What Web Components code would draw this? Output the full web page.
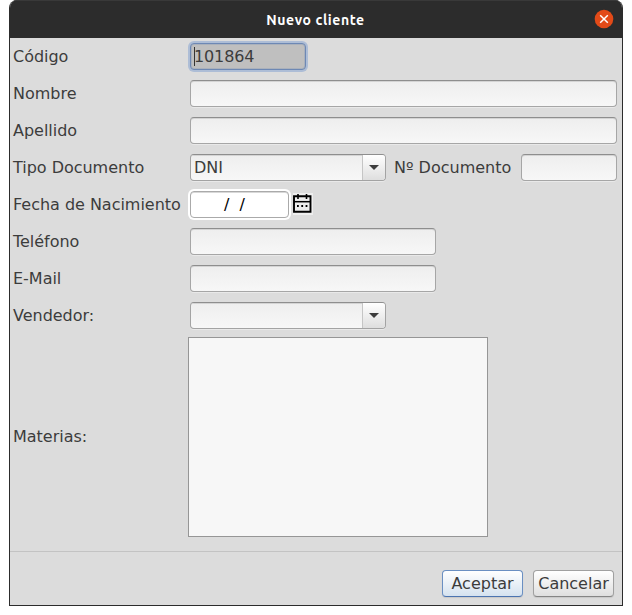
<!DOCTYPE html>
<html lang="es">
<head>
<meta charset="utf-8">
<title>Nuevo cliente</title>
<style>
html,body{margin:0;background:#fff;overflow:hidden}
body{font:16px "DejaVu Sans",sans-serif;color:#3c3c3c}
</style>
</head>
<body>
<app-dialog>
  <span slot="title">Nuevo cliente</span>
  <form-row label="Código"><text-field focused value="101864" style="width:116px"></text-field></form-row>
  <form-row label="Nombre"><text-field style="width:427px"></text-field></form-row>
  <form-row label="Apellido"><text-field style="width:427px"></text-field></form-row>
  <form-row label="Tipo Documento">
    <combo-box value="DNI"></combo-box>
    <side-label>Nº Documento</side-label>
    <text-field style="width:96px"></text-field>
  </form-row>
  <form-row label="Fecha de Nacimiento">
    <text-field date value="/  /" style="width:99px"></text-field>
    <calendar-icon></calendar-icon>
  </form-row>
  <form-row label="Teléfono"><text-field style="width:246px"></text-field></form-row>
  <form-row label="E-Mail"><text-field style="width:246px"></text-field></form-row>
  <form-row label="Vendedor:"><combo-box></combo-box></form-row>
  <form-row label="Materias:" tall><list-box></list-box></form-row>
  <push-button slot="actions" primary>Aceptar</push-button>
  <push-button slot="actions">Cancelar</push-button>
</app-dialog>
<script>
const define = (name, markup, setup) => customElements.define(name, class extends HTMLElement {
  constructor() {
    super();
    this.attachShadow({mode: 'open'}).innerHTML = markup;
  }
  connectedCallback() { if (setup) setup(this, this.shadowRoot); }
});

define('app-dialog', `<style>
:host{display:flex;flex-direction:column;box-sizing:border-box;width:614px;height:606px;margin-left:9px;border:1px solid #2c2c2c;border-top:0;border-radius:8px 8px 0 0;background:#dcdcdc;overflow:hidden}
header{display:grid;grid-template-columns:1fr auto 1fr;align-items:center;height:38px;flex:none;background:#2c2c2c;box-shadow:inset 0 1px #393939;color:#fff;font:bold 14px Ubuntu,"Noto Sans",sans-serif;letter-spacing:.58px}
.title{grid-column:2;padding-top:1px;margin-right:1px;white-space:nowrap}
svg{justify-self:end;margin-right:8px}
main{flex:none}
footer{display:flex;justify-content:flex-end;gap:10px;margin-top:12px;border-top:1px solid #c3c3c3;padding:18px 8px 0 0}
</style>
<header><div class="title"><slot name="title"></slot></div>
<svg width="20" height="20" viewBox="0 0 20 20"><circle cx="10" cy="10" r="9.3" fill="#e24a18"/><path d="M6.2 6.2l7.6 7.6M13.8 6.2l-7.6 7.6" stroke="#fff" stroke-width="1.5"/></svg></header>
<main><slot></slot></main><footer><slot name="actions"></slot></footer>`);

define('form-row', `<style>
:host{display:flex;align-items:center;height:37px}
:host([tall]){height:205px}
label{width:177px;padding-left:3px;box-sizing:content-box;flex:none;white-space:nowrap;letter-spacing:-.02px}
</style><label></label><slot></slot>`, (el, root) => {
  root.querySelector('label').textContent = el.getAttribute('label');
});

define('side-label', `<style>:host{display:block;width:127px;padding-left:8px;white-space:nowrap;box-sizing:content-box}</style><slot></slot>`);

define('text-field', `<style>
:host{display:flex;align-items:center;box-sizing:border-box;height:27px;flex:none;border:1px solid #a6a6a6;border-top-color:#8e8e8e;border-radius:4px;background:linear-gradient(#eee,#f7f7f7);box-shadow:0 1px #e9e9e9,inset 0 1px #d4d4d4;padding-left:3px;white-space:pre}
:host([focused]){background:#bfbfbf;border-color:#6d88b4;box-shadow:0 0 0 2px #adbdd6,inset 0 0 0 1px #aab1bc;letter-spacing:-.12px}
:host([date]){background:#fff;border-color:#aaa;box-shadow:0 0 0 2px #fff,inset 0 1px #d8d8d8;color:#000;padding-left:33px}
i{display:none;width:1px;height:19px;background:#333;margin-right:-1px}
:host([focused]) i{display:block}
</style><i></i><span></span>`, (el, root) => {
  root.querySelector('span').textContent = el.getAttribute('value') || '';
});

define('combo-box', `<style>
:host{display:flex;box-sizing:border-box;width:196px;height:27px;flex:none;border:1px solid #a3a3a3;border-top-color:#8e8e8e;border-radius:4px;background:linear-gradient(#eee,#f7f7f7);box-shadow:0 1px #e9e9e9;overflow:hidden}
.value{flex:1;padding-left:3px;line-height:25px;box-shadow:inset 0 1px #d4d4d4}
.arrow{width:22px;border-left:1px solid #c5c5c5;background:linear-gradient(#fff,#dedede);display:grid;place-items:center}
</style><div class="value"></div><div class="arrow"><svg width="10" height="5" viewBox="0 0 10 5"><path d="M0 0h10L5 5z" fill="#3c3c3c"/></svg></div>`, (el, root) => {
  root.querySelector('.value').textContent = el.getAttribute('value') || '';
});

define('calendar-icon', `<style>:host{display:block;margin:0 0 1px 4px;width:20px;height:22px;background:#eee}svg{display:block}</style>
<svg width="20" height="22" viewBox="0 0 20 22" fill="none" stroke="#000"><path d="M1 3.2h16.5v15.5H1z" stroke-width="1.9"/><path d="M1 8.7h16" stroke-width="1.5"/><path d="M5 1v5M13.5 1v5" stroke-width="1.6"/><path d="M4 13h1.8M8.3 13h1.8M12.6 13h1.8" stroke-width="1.8"/></svg>`);

define('list-box', `<style>:host{display:block;box-sizing:border-box;width:300px;height:200px;margin-left:-2px;border:1px solid #969696;background:#f7f7f7}</style>`);

define('push-button', `<style>
:host{display:block;box-sizing:border-box;width:81px;height:27px;border:1px solid #a0a0a0;border-bottom-color:#858585;border-radius:4px;background:linear-gradient(#fff,#dfdfdf);box-shadow:0 1px 1px #c8c8c8;line-height:25px;text-align:center;white-space:nowrap}
:host([primary]){border-color:#6a8fc2;border-bottom-color:#4c74b0;background:linear-gradient(#fff,#d5e2ef)}
</style><slot></slot>`);
</script>
</body>
</html>
